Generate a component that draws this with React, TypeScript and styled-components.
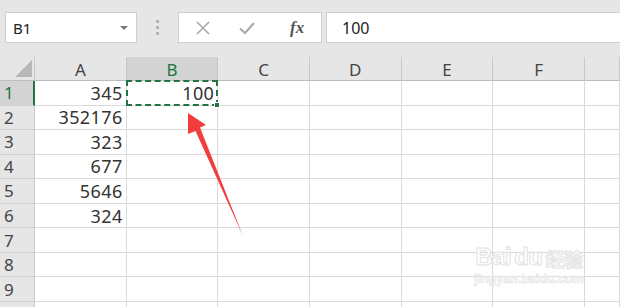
import React from "react"
import styled, { createGlobalStyle } from "styled-components"

const GlobalStyle = createGlobalStyle`
  html, body {
    margin: 0;
    padding: 0;
    background: #e6e6e6;
    overflow: hidden;
  }
  body {
    font-family: "Noto Sans", "Liberation Sans", sans-serif;
  }
`

const COL_W = 91.67
const ROW_H = 24.56
const COLUMNS = ["A", "B", "C", "D", "E", "F", ""]
// row 10 is cut off at the bottom edge, its label is not visible
const ROWS = [1, 2, 3, 4, 5, 6, 7, 8, 9, 10]
const DATA: Record<string, string> = {
  A1: "345",
  B1: "100",
  A2: "352176",
  A3: "323",
  A4: "677",
  A5: "5646",
  A6: "324"
}

const Page = styled.div`
  width: 620px;
  height: 307px;
  display: flex;
  flex-direction: column;
  background: #e6e6e6;
  overflow: hidden;
  position: relative;
`

const Toolbar = styled.div`
  flex-shrink: 0;
  height: 57px;
  display: flex;
  align-items: flex-start;
  padding: 12px 0 0 5px;
  box-sizing: border-box;
`

const NameBox = styled.div`
  width: 132px;
  height: 31px;
  box-sizing: border-box;
  background: #fff;
  border: 1px solid #cfcfcf;
  display: flex;
  align-items: center;
  justify-content: space-between;
  padding: 0 8px 0 7px;
  font-size: 15px;
  color: #222;
`

const DropArrow = styled.span`
  width: 0;
  height: 0;
  border-left: 4px solid transparent;
  border-right: 4px solid transparent;
  border-top: 4px solid #777;
  margin-top: 1px;
`

const Grip = styled.div`
  width: 41px;
  height: 31px;
  display: flex;
  flex-direction: column;
  align-items: center;
  justify-content: center;
  gap: 3px;
  span {
    width: 3px;
    height: 3px;
    background: #b4b4b4;
  }
`

const ButtonGroup = styled.div`
  width: 144px;
  height: 31px;
  box-sizing: border-box;
  background: #fff;
  border: 1px solid #cfcfcf;
  display: flex;
  align-items: center;
  padding-left: 16px;
  gap: 27px;
`

const Fx = styled.span`
  font-family: "Liberation Serif", "DejaVu Serif", serif;
  font-style: italic;
  font-weight: bold;
  font-size: 17px;
  color: #555;
  margin-left: 7px;
`

const FormulaInput = styled.div`
  flex: 1;
  height: 31px;
  margin-left: 4px;
  box-sizing: border-box;
  background: #fff;
  border: 1px solid #cfcfcf;
  border-right: none;
  display: flex;
  align-items: center;
  padding-left: 15px;
  font-size: 16px;
  color: #222;
`

const Sheet = styled.div`
  flex-shrink: 0;
  position: relative;
  display: grid;
  grid-template-columns: 35px repeat(6, ${COL_W}px) 1fr;
  grid-template-rows: 24px repeat(${ROWS.length}, ${ROW_H}px);
  background: #fff;
  font-size: 18px;
  color: #333;
`

const Corner = styled.div`
  background: #e6e6e6;
  border-right: 1px solid #c8c8c8;
  border-bottom: 1px solid #bdbdbd;
  position: relative;
  box-sizing: border-box;
  &::after {
    content: "";
    position: absolute;
    right: 2px;
    bottom: 3px;
    width: 0;
    height: 0;
    border-left: 17px solid transparent;
    border-bottom: 17px solid #b8b8b8;
  }
`

const ColHeader = styled.div<{ $active?: boolean }>`
  box-sizing: border-box;
  background: ${(p) => (p.$active ? "#d3d3d3" : "#e6e6e6")};
  color: ${(p) => (p.$active ? "#217346" : "#444")};
  border-right: 1px solid #c8c8c8;
  border-bottom: 1px solid #bdbdbd;
  display: flex;
  align-items: center;
  justify-content: center;
  font-size: 17px;
  padding-top: 1px;
`

const RowHeader = styled.div<{ $active?: boolean }>`
  box-sizing: border-box;
  background: ${(p) => (p.$active ? "#d3d3d3" : "#e6e6e6")};
  color: ${(p) => (p.$active ? "#217346" : "#444")};
  border-right: ${(p) => (p.$active ? "2px solid #217346" : "1px solid #c8c8c8")};
  border-bottom: 1px solid #cfcfcf;
  display: flex;
  align-items: center;
  padding-left: 4px;
  font-size: 17px;
`

const Cell = styled.div`
  box-sizing: border-box;
  border-right: 1px solid #dadada;
  border-bottom: 1px solid #dadada;
  display: flex;
  align-items: center;
  justify-content: flex-end;
  padding-right: 3px;
  letter-spacing: 0.4px;
  white-space: nowrap;
`

const CopyMarquee = styled.div`
  position: absolute;
  left: ${35 + COL_W - 1}px;
  top: 23px;
  width: ${COL_W + 1}px;
  height: ${ROW_H + 1}px;
  box-sizing: border-box;
  border: 2px dashed #217346;
  pointer-events: none;
  &::after {
    content: "";
    position: absolute;
    right: -4px;
    bottom: -4px;
    width: 4px;
    height: 4px;
    background: #217346;
    border: 1px solid #fff;
  }
`

const ArrowLayer = styled.svg`
  position: absolute;
  left: 0;
  top: 0;
  pointer-events: none;
`

const Watermark = styled.div`
  position: absolute;
  left: 474px;
  top: 240px;
  display: flex;
  flex-direction: column;
  align-items: center;
  white-space: nowrap;
  pointer-events: none;
  color: #fff;
  -webkit-text-stroke: 1px #e2e2e2;
`

const MarkTitle = styled.div`
  font-family: "Liberation Sans", sans-serif;
  font-weight: bold;
  font-size: 24px;
  line-height: 34px;
  letter-spacing: -0.5px;
  display: flex;
  align-items: flex-end;
  gap: 3px;
  small {
    font-family: "Noto Sans CJK SC", sans-serif;
    font-size: 19px;
    font-weight: bold;
    line-height: 30px;
  }
`

const MarkUrl = styled.div`
  font-family: "Liberation Sans", sans-serif;
  font-size: 12.5px;
  font-weight: bold;
  -webkit-text-stroke: 0.7px #e2e2e2;
  margin-top: -2px;
`

const XIcon = () => (
  <svg width="16" height="16" viewBox="0 0 16 16">
    <path d="M2 2 L14 14 M14 2 L2 14" stroke="#a9a9a9" strokeWidth="1.6" fill="none" />
  </svg>
)

const CheckIcon = () => (
  <svg width="18" height="16" viewBox="0 0 18 16">
    <path d="M2 8.5 L7 13 L16 3" stroke="#a9a9a9" strokeWidth="2" fill="none" />
  </svg>
)

export default function App() {
  return (
    <Page>
      <GlobalStyle />
      <Toolbar>
        <NameBox>
          <span>B1</span>
          <DropArrow />
        </NameBox>
        <Grip>
          <span />
          <span />
          <span />
        </Grip>
        <ButtonGroup>
          <XIcon />
          <CheckIcon />
          <Fx>fx</Fx>
        </ButtonGroup>
        <FormulaInput>100</FormulaInput>
      </Toolbar>
      <Sheet>
        <Corner />
        {COLUMNS.map((c, i) => (
          <ColHeader key={i} $active={c === "B"}>
            {c}
          </ColHeader>
        ))}
        {ROWS.map((r) => (
          <React.Fragment key={r}>
            <RowHeader $active={r === 1}>{r < 10 ? r : ""}</RowHeader>
            {COLUMNS.map((c, i) => (
              <Cell key={i}>{c ? DATA[c + r] ?? "" : ""}</Cell>
            ))}
          </React.Fragment>
        ))}
        <CopyMarquee />
      </Sheet>
      <ArrowLayer width="620" height="307" viewBox="0 0 620 307">
        <path
          d="M188 113 L206 125 L200 127.5 L243 236 L195.5 131 L188 134 Z"
          fill="#f23d3d"
        />
      </ArrowLayer>
      <Watermark>
        <MarkTitle>
          <span>Bai</span>
          <span>du</span>
          <small>经验</small>
        </MarkTitle>
        <MarkUrl>jingyan.baidu.com</MarkUrl>
      </Watermark>
    </Page>
  )
}
